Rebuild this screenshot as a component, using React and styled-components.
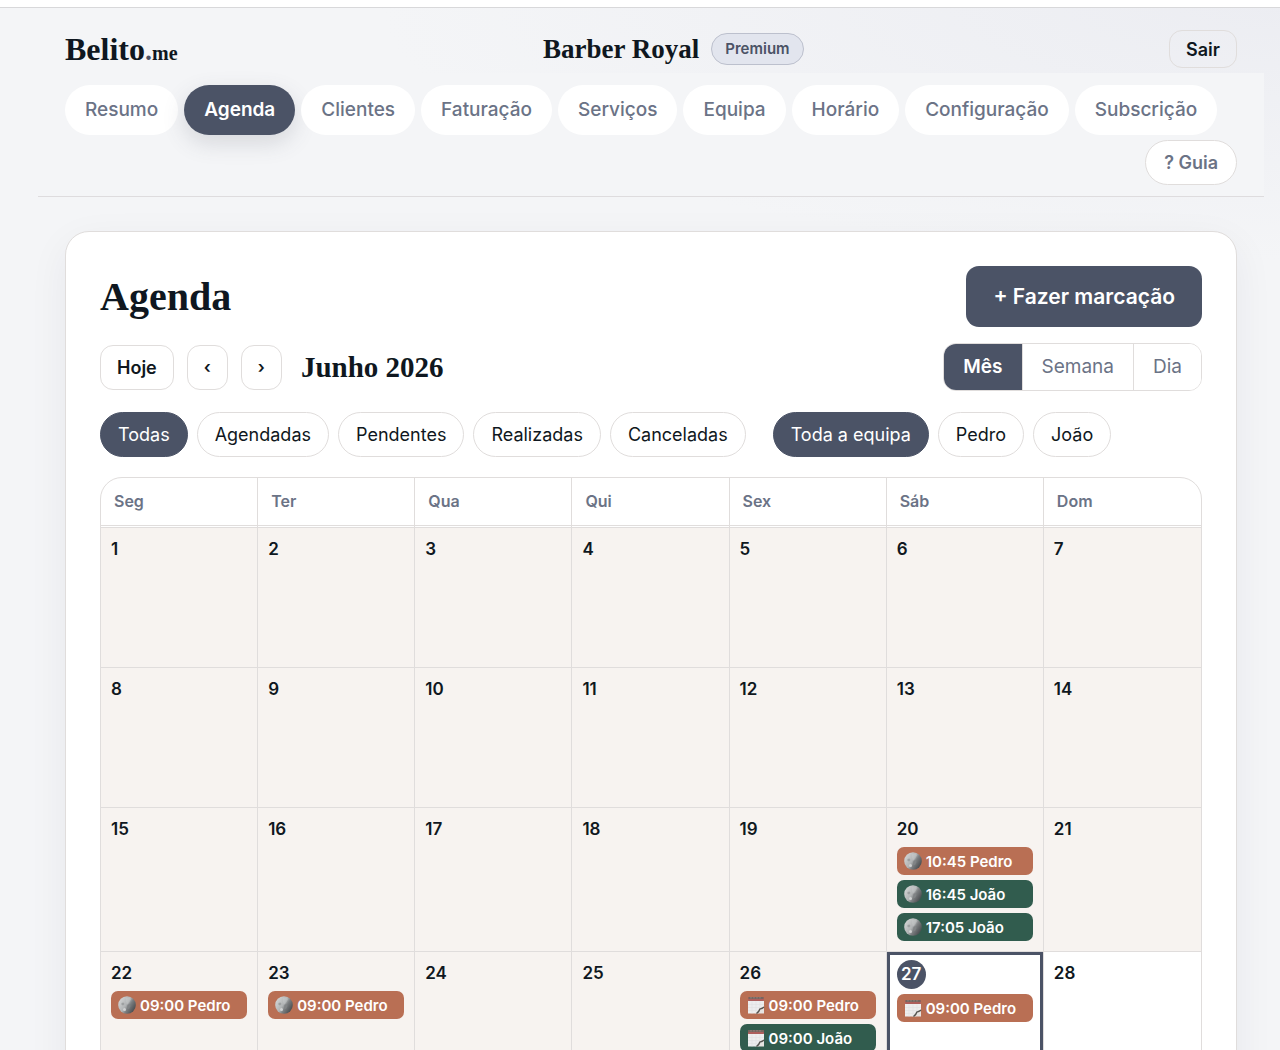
import React, { useState } from 'react'
import styled, { createGlobalStyle, css } from 'styled-components'

const slate = '#4b5366'
const ink = '#0f1720'
const muted = '#6b7386'
const line = '#e0dddc'
const serif = '"Liberation Serif", "Times New Roman", serif'

const GlobalStyle = createGlobalStyle`
    *{
        box-sizing:border-box;
    }
    body{
        margin:0;
        font-family:Inter, "Liberation Sans", sans-serif;
        font-size:18px;
        color:${ink};
        background:radial-gradient(ellipse 900px 260px at 100% 0, #ecedf2, #f4f5f7);
        background-color:#f4f5f7;
        background-repeat:no-repeat;
    }
    button{
        font-family:inherit;
        color:inherit;
        cursor:pointer;
        white-space:nowrap;
    }
`

const TopStrip = styled.div`
    height:8px;
    background:#fff;
    border-bottom:1px solid #d8d8da;
`

const Shell = styled.div`
    margin:0 16px 0 38px;
`

const Header = styled.header`
    display:flex;
    justify-content:space-between;
    align-items:center;
    padding:22px 27px 5px;
`

const Logo = styled.a`
    font-family:${serif};
    font-size:32px;
    line-height:36px;
    font-weight:700;
    color:${ink};
    text-decoration:none;
    small{
        font-size:20px;
        line-height:1;
    }
    span{
        font-size:28px;
        line-height:1;
        color:${slate};
    }
`

const Shop = styled.div`
    display:flex;
    align-items:center;
    gap:12px;
    font-family:${serif};
    font-size:27px;
    line-height:32px;
    font-weight:700;
`

const Plan = styled.span`
    font-family:Inter, "Liberation Sans", sans-serif;
    font-size:15px;
    line-height:30px;
    font-weight:600;
    color:${slate};
    background:#e2e5ee;
    border:1px solid #bcc0cd;
    border-radius:16px;
    padding:0 13px;
`

const OutlineButton = styled.button`
    height:${p => (p.$small ? '38px' : '45px')};
    padding:0 16px;
    font-size:${p => (p.$arrow ? '17px' : '18px')};
    font-weight:600;
    background:${p => (p.$small ? 'transparent' : '#fff')};
    border:1px solid ${line};
    border-radius:13px;
`

const Nav = styled.nav`
    display:flex;
    flex-wrap:wrap;
    gap:5px 6px;
    padding:12px 27px 11px;
    background:#f4f5f7;
    border-bottom:1px solid #dedcde;
`

const Tab = styled.button`
    height:50px;
    padding:0 20px 2px;
    font-size:19px;
    font-weight:500;
    color:${muted};
    background:#fff;
    border:none;
    border-radius:25px;
    ${p => p.$active && css`
        color:#fff;
        font-weight:600;
        background:${slate};
        box-shadow:0 8px 22px rgba(75,83,102,0.18);
    `}
`

const Guide = styled.button`
    height:45px;
    margin-left:auto;
    padding:0 18px;
    font-size:18px;
    font-weight:600;
    color:${muted};
    background:#fff;
    border:1px solid ${line};
    border-radius:23px;
`

const Card = styled.main`
    margin:34px 27px;
    padding:34px;
    background:#fff;
    border:1px solid ${line};
    border-radius:24px;
    box-shadow:0 12px 40px rgba(30,40,60,0.06);
`

const Row = styled.div`
    display:flex;
    justify-content:space-between;
    align-items:center;
    margin-bottom:${p => p.$space};
`

const Title = styled.h1`
    margin:0;
    font-family:${serif};
    font-size:40px;
    line-height:48px;
`

const Primary = styled.button`
    height:61px;
    padding:0 27px;
    font-size:21px;
    font-weight:600;
    color:#fff;
    background:${slate};
    border:none;
    border-radius:13px;
`

const DateNav = styled.div`
    display:flex;
    align-items:center;
    gap:13px;
`

const Month = styled.h2`
    margin:0 0 0 6px;
    font-family:${serif};
    font-size:29px;
    line-height:32px;
`

const Segment = styled.div`
    display:flex;
    height:48px;
    border:1px solid ${line};
    border-radius:13px;
    overflow:hidden;
`

const SegmentButton = styled.button`
    padding:0 19px 2px;
    font-size:19px;
    color:${muted};
    background:#fff;
    border:none;
    & + &{
        border-left:1px solid ${line};
    }
    ${p => p.$active && css`
        color:#fff;
        font-weight:600;
        background:${slate};
    `}
`

const Filters = styled.div`
    display:flex;
    flex-wrap:wrap;
    gap:9px 27px;
    margin-bottom:20px;
`

const FilterGroup = styled.div`
    display:flex;
    flex-wrap:wrap;
    gap:9px;
`

const Chip = styled.button`
    height:45px;
    padding:0 17px;
    font-size:18px;
    background:#fff;
    border:1px solid ${line};
    border-radius:23px;
    ${p => p.$active && css`
        color:#fff;
        background:${slate};
        border-color:${slate};
    `}
`

const CalendarBox = styled.div`
    border:1px solid ${line};
    border-radius:22px;
    overflow:hidden;
`

const Calendar = styled.table`
    width:100%;
    table-layout:fixed;
    border-collapse:separate;
    border-spacing:0;
    th{
        height:50px;
        padding:0 13px 2px;
        font-size:16px;
        font-weight:600;
        color:${muted};
        text-align:left;
        border-bottom:3px double ${line};
    }
    th:not(:last-child), td:not(:last-child){
        border-right:1px solid ${line};
    }
`

const Day = styled.td`
    height:140px;
    padding:10px;
    vertical-align:top;
    background:${p => (p.$past ? '#f7f3f0' : '#fff')};
    border-bottom:1px solid ${line};
    ${p => p.$today && css`
        padding-top:8px;
        box-shadow:inset 0 0 0 3px ${slate};
    `}
`

const DayNumber = styled.div`
    margin-bottom:7px;
    font-size:17px;
    line-height:22px;
    font-weight:600;
    ${p => p.$today && css`
        width:29px;
        margin-bottom:5px;
        line-height:29px;
        text-align:center;
        color:#fff;
        background:${slate};
        border-radius:50%;
    `}
`

const Events = styled.div`
    display:flex;
    flex-direction:column;
    gap:5px;
`

const Event = styled.button`
    display:flex;
    align-items:center;
    gap:4px;
    width:100%;
    height:28px;
    padding:0 7px;
    font-size:15px;
    font-weight:600;
    && {
        color:#fff;
    }
    background:${p => (p.$who === 'João' ? '#315c4e' : '#b96f54')};
    border:none;
    border-radius:7px;
`

function MoonIcon() {
    return (
        <svg width="18" height="18" viewBox="0 0 18 18" aria-hidden="true">
            <defs>
                <linearGradient id="moon" x1="0.1" y1="0.25" x2="0.9" y2="0.75">
                    <stop offset="0" stopColor="#cdcfcf" />
                    <stop offset="0.45" stopColor="#b0b3b4" />
                    <stop offset="0.65" stopColor="#7b7e80" />
                    <stop offset="1" stopColor="#4e5154" />
                </linearGradient>
            </defs>
            <circle cx="9" cy="9" r="8.8" fill="url(#moon)" />
            <path d="M8 2l4-.5 1 2-2 3.500-2 1.500-1-3z" fill="#cfd1d1" opacity="0.35" />
            <path d="M3.500 7l2-.5 1 1.500-1.500 1.500-1.500-.8z" fill="#9da0a1" />
            <circle cx="6.500" cy="13.500" r="1.500" fill="#d0d2d2" />
            <path d="M9.500 9l2-1 1 2-1.500 3-2-.5z" fill="#808385" />
        </svg>
    )
}

function PadIcon() {
    return (
        <svg width="18" height="18" viewBox="0 0 18 18" aria-hidden="true">
            <path d="M1 4h16v7.500l-6 6H1z" fill="#ededee" />
            <path d="M1.500 1h15l.5 4H1z" fill="#ad5e5c" />
            <path d="M1.500 1h15v2h-15z" fill="#75655f" />
            <path d="M4 1v1.500M7 1v1.500M10 1v1.500M13 1v1.500" stroke="#a08f89" strokeWidth="0.8" />
            <path d="M1 8.500h16M1 11.500h14M1 14.500h10M5 5.500v12M9 5.500v12M13 5.500v7" stroke="#e0e0e2" strokeWidth="0.6" />
            <path d="M17 11.500v6h-7z" fill="#e6e3e1" />
            <path d="M17 11c-1.500 1.300-3 1.500-4.200 2.200-.3 1.700-1.600 3-3.300 4.300" stroke="#55534f" strokeWidth="1.400" fill="none" />
        </svg>
    )
}

const tabs = ['Resumo', 'Agenda', 'Clientes', 'Faturação', 'Serviços', 'Equipa', 'Horário', 'Configuração', 'Subscrição']
const views = ['Mês', 'Semana', 'Dia']
const states = ['Todas', 'Agendadas', 'Pendentes', 'Realizadas', 'Canceladas']
const team = ['Toda a equipa', 'Pedro', 'João']
const weekdays = ['Seg', 'Ter', 'Qua', 'Qui', 'Sex', 'Sáb', 'Dom']
const weeks = [0, 1, 2, 3].map(w => weekdays.map((_, d) => w * 7 + d + 1))
const today = 27

const bookings = {
    20: [
        { time: '10:45', who: 'Pedro', done: true },
        { time: '16:45', who: 'João', done: true },
        { time: '17:05', who: 'João', done: true },
    ],
    22: [{ time: '09:00', who: 'Pedro', done: true }],
    23: [{ time: '09:00', who: 'Pedro', done: true }],
    26: [
        { time: '09:00', who: 'Pedro' },
        { time: '09:00', who: 'João' },
    ],
    27: [{ time: '09:00', who: 'Pedro' }],
}

function ChipGroup({ items, value, onChange }) {
    return (
        <FilterGroup>
            {items.map(item => (
                <Chip key={item} type="button" $active={item === value} onClick={() => onChange(item)}>
                    {item}
                </Chip>
            ))}
        </FilterGroup>
    )
}

function DayCell({ day }) {
    const events = bookings[day] || []
    return (
        <Day $past={day < today} $today={day === today}>
            <DayNumber $today={day === today}>{day}</DayNumber>
            <Events>
                {events.map(ev => (
                    <Event key={ev.time + ev.who} type="button" $who={ev.who}>
                        {ev.done ? <MoonIcon /> : <PadIcon />}
                        {ev.time} {ev.who}
                    </Event>
                ))}
            </Events>
        </Day>
    )
}

function App() {
    const [tab, setTab] = useState('Agenda')
    const [view, setView] = useState('Mês')
    const [state, setState] = useState('Todas')
    const [member, setMember] = useState('Toda a equipa')

    return (
        <>
            <GlobalStyle />
            <TopStrip />
            <Shell>
                <Header>
                    <Logo href="#">Belito<span>.</span><small>me</small></Logo>
                    <Shop>
                        Barber Royal
                        <Plan>Premium</Plan>
                    </Shop>
                    <OutlineButton type="button" $small>Sair</OutlineButton>
                </Header>
                <Nav>
                    {tabs.map(name => (
                        <Tab key={name} type="button" $active={name === tab} onClick={() => setTab(name)}>
                            {name}
                        </Tab>
                    ))}
                    <Guide type="button">? Guia</Guide>
                </Nav>
                <Card>
                    <Row $space="16px">
                        <Title>Agenda</Title>
                        <Primary type="button">+ Fazer marcação</Primary>
                    </Row>
                    <Row $space="21px">
                        <DateNav>
                            <OutlineButton type="button">Hoje</OutlineButton>
                            <OutlineButton type="button" $arrow aria-label="Mês anterior">‹</OutlineButton>
                            <OutlineButton type="button" $arrow aria-label="Mês seguinte">›</OutlineButton>
                            <Month>Junho 2026</Month>
                        </DateNav>
                        <Segment>
                            {views.map(name => (
                                <SegmentButton key={name} type="button" $active={name === view} onClick={() => setView(name)}>
                                    {name}
                                </SegmentButton>
                            ))}
                        </Segment>
                    </Row>
                    <Filters>
                        <ChipGroup items={states} value={state} onChange={setState} />
                        <ChipGroup items={team} value={member} onChange={setMember} />
                    </Filters>
                    <CalendarBox>
                        <Calendar>
                            <thead>
                                <tr>
                                    {weekdays.map(name => <th key={name} scope="col">{name}</th>)}
                                </tr>
                            </thead>
                            <tbody>
                                {weeks.map(week => (
                                    <tr key={week[0]}>
                                        {week.map(day => <DayCell key={day} day={day} />)}
                                    </tr>
                                ))}
                            </tbody>
                        </Calendar>
                    </CalendarBox>
                </Card>
            </Shell>
        </>
    )
}

export default App
